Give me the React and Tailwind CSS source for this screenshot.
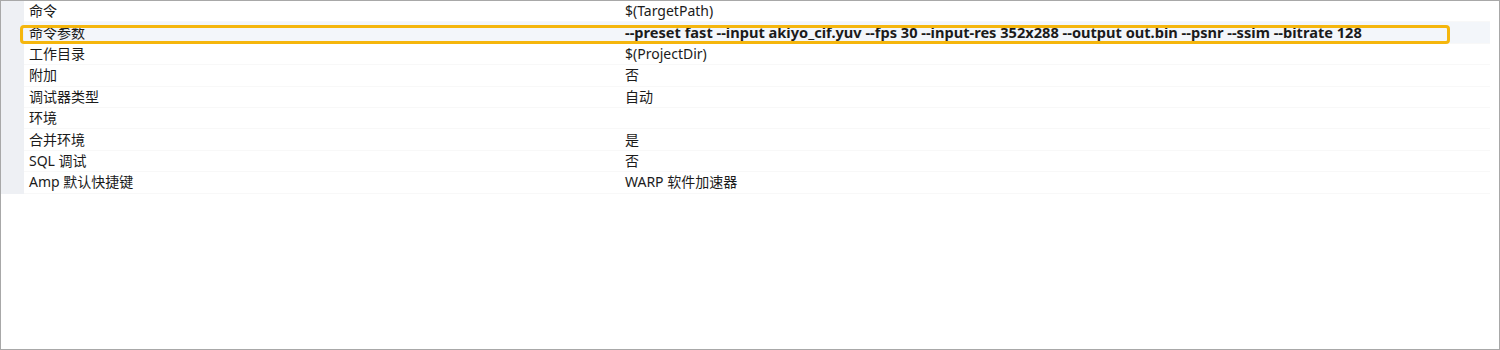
import React from "react";

const rows = [
  { key: "命令", value: "$(TargetPath)" },
  { key: "命令参数", value: "--preset fast --input akiyo_cif.yuv --fps 30 --input-res 352x288 --output out.bin --psnr --ssim --bitrate 128", bold: true, selected: true },
  { key: "工作目录", value: "$(ProjectDir)" },
  { key: "附加", value: "否" },
  { key: "调试器类型", value: "自动" },
  { key: "环境", value: "" },
  { key: "合并环境", value: "是" },
  { key: "SQL 调试", value: "否" },
  { key: "Amp 默认快捷键", value: "WARP 软件加速器" },
];

const font = { fontFamily: '"Noto Sans", "Noto Sans CJK SC", sans-serif' };

const App = () => {
  return (
    <div className="w-[1500px] h-[350px] bg-white border border-[#a8a8a8] overflow-hidden" style={font}>
      <div className="flex w-[1489px]">
        <div className="w-[23px] bg-[#eef0f4] shrink-0" />
        <div className="flex-1">
          {rows.map((r, i) => (
            <div
              key={i}
              className={
                "relative flex items-center h-[21.4px] text-[14px] leading-none text-[#1b1b1b] border-b border-[#f8f8f8] " +
                (r.selected ? "bg-[#f3f6fa]" : "")
              }
            >
              <div className="w-[600px] pl-[5px] shrink-0">{r.key}</div>
              <div className={"pl-[1px] whitespace-nowrap " + (r.bold ? "font-bold text-[14.6px]" : "")}>{r.value}</div>
              {r.selected && (
                <div className="absolute left-[-4px] top-[3px] w-[1430px] h-[19px] border-[3px] border-[#f5b60d] rounded-[4px]" />
              )}
            </div>
          ))}
        </div>
      </div>
    </div>
  );
};

export default App;
